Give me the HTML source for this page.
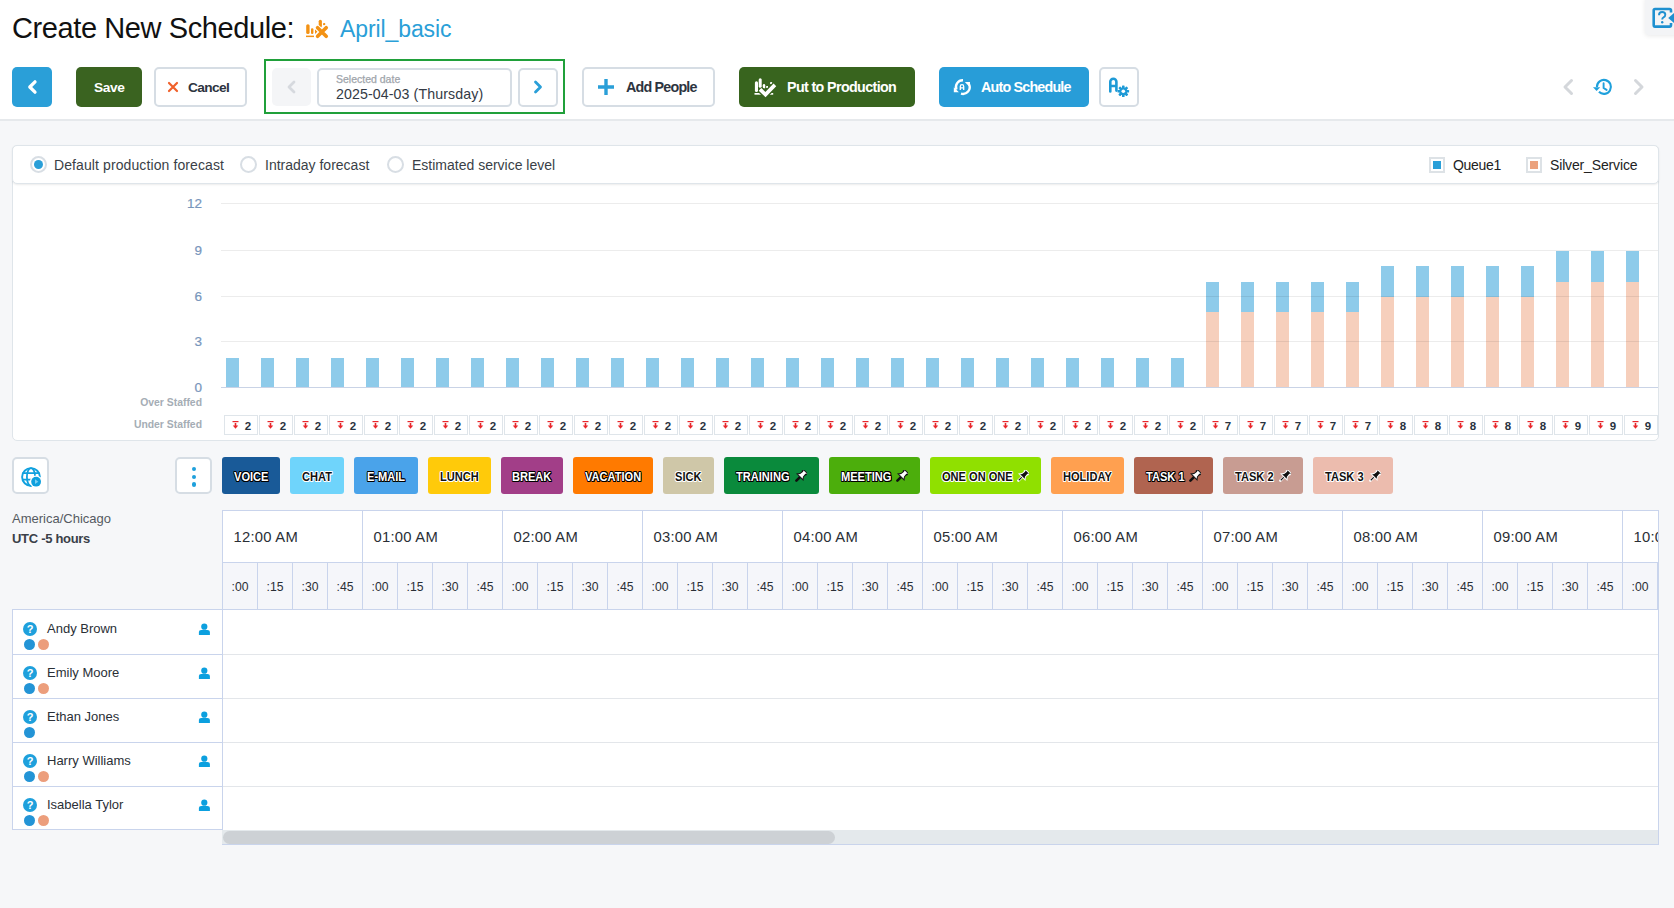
<!DOCTYPE html><html><head><meta charset="utf-8"><style>
*{box-sizing:border-box;margin:0;padding:0}
html,body{width:1674px;height:908px;overflow:hidden}
body{background:#f6f7f9;font-family:"Liberation Sans",sans-serif;position:relative;color:#2b3038}
.abs{position:absolute}
.t{position:absolute;white-space:nowrap;line-height:1}
.btn{position:absolute;border-radius:5px}
.ob{position:absolute;border:2px solid #d6dde4;border-radius:5px;background:#fff}
</style></head><body>

<div class="abs" style="left:0;top:0;width:1674px;height:119px;background:#fff"></div>
<div class="abs" style="left:0;top:119px;width:1674px;height:2px;background:#e6e9ec"></div>
<div class="t" style="left:12px;top:14.2px;font-size:29px;color:#111;letter-spacing:-0.4px">Create New Schedule:</div>
<svg class="abs" style="left:300px;top:14px" width="32" height="28" viewBox="0 0 32 28">
<g fill="#f39214"><rect x="6.2" y="10.2" width="3.4" height="9.8" rx="1.6"/><rect x="11" y="14.2" width="2.4" height="5.8" rx="1.1"/>
<path d="M15 15.2 L17.6 17.6 L15 20Z"/><rect x="6" y="21.6" width="8" height="1.5"/>
<rect x="18.7" y="5.7" width="3.2" height="7.8" rx="1.6"/><rect x="23" y="9" width="2.3" height="2.2" rx="1"/></g>
<path d="M17.6 13.8 L26.2 22.2 M26.2 13.8 L17.6 22.2" stroke="#fff" stroke-width="5.6" stroke-linecap="round"/>
<path d="M17.6 13.8 L26.2 22.2 M26.2 13.8 L17.6 22.2" stroke="#f39214" stroke-width="3.7" stroke-linecap="round"/>
</svg>
<div class="t" style="left:340px;top:18.3px;font-size:23px;color:#2a9fd8;letter-spacing:-0.1px">April_basic</div>
<div class="btn" style="left:12px;top:67px;width:40px;height:40px;background:#2a9fd8"></div>
<svg class="abs" style="left:12px;top:67px" width="40" height="40"><path d="M23 14.8 L17.8 20 L23 25.2" stroke="#fff" stroke-width="3.3" fill="none" stroke-linecap="round" stroke-linejoin="round"/></svg>
<div class="btn" style="left:76px;top:67px;width:66px;height:40px;background:#3a6320"></div>
<div class="t" style="left:94px;top:80.5px;font-size:13.7px;font-weight:700;color:#fff;letter-spacing:-0.4px">Save</div>
<div class="ob" style="left:154px;top:67px;width:93px;height:40px"></div>
<svg class="abs" style="left:167px;top:81px" width="12" height="12"><path d="M2 2 L10 10 M10 2 L2 10" stroke="#f0602a" stroke-width="2.2" stroke-linecap="round"/></svg>
<div class="t" style="left:188px;top:80.5px;font-size:13.7px;font-weight:700;color:#2d3440;letter-spacing:-0.6px">Cancel</div>
<div class="abs" style="left:264px;top:59px;width:301px;height:55px;border:2px solid #20a03a"></div>
<div class="btn" style="left:272px;top:68px;width:39px;height:38px;background:#f4f5f7"></div>
<svg class="abs" style="left:272px;top:68px" width="39" height="38"><path d="M22 14 L17 19 L22 24" stroke="#d6d9de" stroke-width="2.8" fill="none" stroke-linecap="round" stroke-linejoin="round"/></svg>
<div class="ob" style="left:317px;top:68px;width:195px;height:39px"></div>
<div class="t" style="left:336px;top:74px;font-size:10.5px;color:#a0a5ab;-webkit-text-stroke:0.25px #a0a5ab">Selected date</div>
<div class="t" style="left:336px;top:87px;font-size:14.2px;color:#333a45;letter-spacing:0.1px">2025-04-03 (Thursday)</div>
<div class="ob" style="left:518px;top:68px;width:40px;height:39px"></div>
<svg class="abs" style="left:518px;top:68px" width="40" height="39"><path d="M17.5 14 L22.5 19 L17.5 24" stroke="#2a9fd8" stroke-width="2.8" fill="none" stroke-linecap="round" stroke-linejoin="round"/></svg>
<div class="ob" style="left:582px;top:67px;width:133px;height:40px"></div>
<svg class="abs" style="left:597px;top:78px" width="18" height="18"><path d="M9 1 V17 M1 9 H17" stroke="#2a9fd8" stroke-width="3.4"/></svg>
<div class="t" style="left:626px;top:80px;font-size:14.3px;font-weight:700;color:#2d3440;letter-spacing:-0.8px">Add People</div>
<div class="btn" style="left:739px;top:67px;width:176px;height:40px;background:#38641e"></div>
<svg class="abs" style="left:750px;top:74px" width="30" height="26" viewBox="0 0 30 26">
<g fill="#fff"><rect x="4.9" y="7.2" width="3.1" height="10.8" rx="1.5"/><rect x="8.7" y="4.3" width="3" height="9.5" rx="1.5"/>
<rect x="12.8" y="10" width="2.4" height="4.5" rx="1.2"/><rect x="16.2" y="12" width="1.8" height="2"/><rect x="20" y="8" width="2.3" height="2.3" rx="1"/>
<rect x="4.5" y="19" width="7" height="1.7"/><rect x="18.6" y="19" width="4.6" height="1.7"/><rect x="18.5" y="16" width="3.5" height="1.8"/></g>
<path d="M10 15.3 L15.5 20.6 L24.9 10.9" stroke="#38641e" stroke-width="6.5" fill="none"/>
<path d="M10 15.3 L15.5 20.6 L24.9 10.9" stroke="#fff" stroke-width="3.7" fill="none"/>
</svg>
<div class="t" style="left:787px;top:80px;font-size:14.3px;font-weight:700;color:#fff;letter-spacing:-0.63px">Put to Production</div>
<div class="btn" style="left:939px;top:67px;width:150px;height:40px;background:#289dd8"></div>
<svg class="abs" style="left:948px;top:74px" width="28" height="26" viewBox="0 0 28 26">
<path d="M15 6.3 A6.8 6.8 0 0 0 8.4 15.6" stroke="#fff" stroke-width="2.4" fill="none"/>
<path d="M5.8 13.2 L5.8 18.2 L10.9 18.2Z" fill="#fff"/>
<path d="M21 10.2 A6.8 6.8 0 0 1 13 19.7" stroke="#fff" stroke-width="2.4" fill="none"/>
<path d="M16.8 8 L22 8 L22 13.2Z" fill="#fff"/>
<path d="M12.3 15.9 V12.4 A1.7 1.7 0 0 1 15.7 12.4 V15.9 M12.3 13.9 H15.7" stroke="#fff" stroke-width="1.3" fill="none"/>
</svg>
<div class="t" style="left:981px;top:80px;font-size:14.3px;font-weight:700;color:#fff;letter-spacing:-0.8px">Auto Schedule</div>
<div class="ob" style="left:1099px;top:67px;width:40px;height:40px"></div>
<svg class="abs" style="left:1104px;top:72px" width="30" height="30" viewBox="0 0 30 30">
<path d="M6.3 19.5 V9.8 A3.05 3.05 0 0 1 12.4 9.8 V18.6 M6.3 14 H12.4" stroke="#1e9ad6" stroke-width="2.6" fill="none" stroke-linecap="round"/>
<g transform="translate(19.3 19.3)" fill="#1e9ad6"><circle r="5.5" fill="#fff"/><rect x="-1.3" y="-5.8" width="2.6" height="3" rx="0.6" transform="rotate(0)"/><rect x="-1.3" y="-5.8" width="2.6" height="3" rx="0.6" transform="rotate(45)"/><rect x="-1.3" y="-5.8" width="2.6" height="3" rx="0.6" transform="rotate(90)"/><rect x="-1.3" y="-5.8" width="2.6" height="3" rx="0.6" transform="rotate(135)"/><rect x="-1.3" y="-5.8" width="2.6" height="3" rx="0.6" transform="rotate(180)"/><rect x="-1.3" y="-5.8" width="2.6" height="3" rx="0.6" transform="rotate(225)"/><rect x="-1.3" y="-5.8" width="2.6" height="3" rx="0.6" transform="rotate(270)"/><rect x="-1.3" y="-5.8" width="2.6" height="3" rx="0.6" transform="rotate(315)"/><circle r="3.9"/><circle r="1.8" fill="#fff"/></g>
</svg>
<svg class="abs" style="left:1558px;top:76px" width="20" height="21"><path d="M13.5 4.5 L7 11 L13.5 17.5" stroke="#d4d7db" stroke-width="3" fill="none" stroke-linecap="round" stroke-linejoin="round"/></svg>
<svg class="abs" style="left:1588px;top:74px" width="30" height="26" viewBox="0 0 30 26">
<path d="M10.95 17.85 A7 7 0 1 0 8.9 12.9" stroke="#1ea0dc" stroke-width="2.1" fill="none"/>
<path d="M5 13.2 L12.2 13.2 L8.6 16.9Z" fill="#1ea0dc"/><path d="M15.6 9.2 V14 L18.6 15.9" stroke="#1ea0dc" stroke-width="1.9" fill="none" stroke-linecap="round"/>
</svg>
<svg class="abs" style="left:1630px;top:76px" width="20" height="21"><path d="M5.5 4.5 L12 11 L5.5 17.5" stroke="#d4d7db" stroke-width="3" fill="none" stroke-linecap="round" stroke-linejoin="round"/></svg>
<div class="abs" style="left:1645px;top:-2px;width:40px;height:37px;background:#f3f4f6;box-shadow:0 1px 5px rgba(0,0,0,0.09);border-radius:0 0 0 4px"></div>
<svg class="abs" style="left:1652px;top:7px" width="22" height="22" viewBox="0 0 22 22">
<path d="M19 5.5 V3.5 Q19 2 17.5 2 H3 Q1.7 2 1.7 3.5 V18 Q1.7 19.6 3 19.6 H17.5 Q19 19.6 19 18 V16" stroke="#1e90d0" stroke-width="2.6" fill="none"/>
<path d="M22 6 L16.2 11 L22 16Z" fill="#1e90d0"/>
<path d="M7 8.2 Q7 5 10.2 5 Q13.3 5 13.3 7.8 Q13.3 9.6 11.5 10.4 Q10.2 11 10.2 12.6" stroke="#1e90d0" stroke-width="1.9" fill="none"/>
<circle cx="10.2" cy="15.3" r="1.2" fill="#1e90d0"/>
</svg>
<div class="abs" style="left:12px;top:145px;width:1647px;height:296px;background:#fff;border:1px solid #dfe5ea;border-radius:5px"></div>
<div class="abs" style="left:12px;top:145px;width:1647px;height:39px;background:#fff;border:1px solid #dfe5ea;border-radius:5px;box-shadow:0 1px 2px rgba(0,0,0,0.08)"></div>
<div class="abs" style="left:30px;top:156px;width:17px;height:17px;border-radius:50%;border:2px solid #d8dee4;background:#fff"></div><div class="abs" style="left:34px;top:160px;width:9px;height:9px;border-radius:50%;background:#2a9fd8"></div>
<div class="abs" style="left:240px;top:156px;width:17px;height:17px;border-radius:50%;border:2px solid #d8dee4;background:#fff"></div>
<div class="abs" style="left:387px;top:156px;width:17px;height:17px;border-radius:50%;border:2px solid #d8dee4;background:#fff"></div>
<div class="t" style="left:54px;top:158px;font-size:14px;color:#3a3f47;letter-spacing:0.1px">Default production forecast</div>
<div class="t" style="left:265px;top:158px;font-size:14px;color:#3a3f47">Intraday forecast</div>
<div class="t" style="left:412px;top:158px;font-size:14px;color:#3a3f47">Estimated service level</div>
<div class="abs" style="left:1429px;top:157px;width:16px;height:16px;border:2px solid #dde2e6;background:#fff"></div><div class="abs" style="left:1433px;top:161px;width:8px;height:8px;background:#2a9fd8"></div>
<div class="t" style="left:1453px;top:158px;font-size:14px;color:#222;letter-spacing:-0.3px">Queue1</div>
<div class="abs" style="left:1526px;top:157px;width:16px;height:16px;border:2px solid #dde2e6;background:#fff"></div><div class="abs" style="left:1530px;top:161px;width:8px;height:8px;background:#eba27e"></div>
<div class="t" style="left:1550px;top:158px;font-size:14px;color:#222;letter-spacing:-0.15px">Silver_Service</div>
<div class="t" style="left:150px;width:52px;text-align:right;top:197px;font-size:13.5px;color:#7896bc;-webkit-text-stroke:0.2px #7896bc">12</div>
<div class="t" style="left:150px;width:52px;text-align:right;top:244px;font-size:13.5px;color:#7896bc;-webkit-text-stroke:0.2px #7896bc">9</div>
<div class="t" style="left:150px;width:52px;text-align:right;top:290px;font-size:13.5px;color:#7896bc;-webkit-text-stroke:0.2px #7896bc">6</div>
<div class="t" style="left:150px;width:52px;text-align:right;top:335px;font-size:13.5px;color:#7896bc;-webkit-text-stroke:0.2px #7896bc">3</div>
<div class="t" style="left:150px;width:52px;text-align:right;top:381px;font-size:13.5px;color:#7896bc;-webkit-text-stroke:0.2px #7896bc">0</div>
<div class="t" style="left:100px;width:102px;text-align:right;top:398px;font-size:10.4px;font-weight:700;color:#a5adb5">Over Staffed</div>
<div class="t" style="left:100px;width:102px;text-align:right;top:420px;font-size:10.4px;font-weight:700;color:#a5adb5">Under Staffed</div>
<div class="abs" style="left:226px;top:358px;width:13px;height:29px;background:#8ecbea"></div>
<div class="abs" style="left:224px;top:415px;width:34px;height:20px;border:1px solid #dfe5ea"></div>
<svg class="abs" style="left:232px;top:421px" width="7" height="8" viewBox="0 0 7 8"><path d="M0.5 0.6 H6.5" stroke="#e8262a" stroke-width="1.2"/><path d="M3.5 2 V5" stroke="#e8262a" stroke-width="1.6"/><path d="M0.8 4.4 L3.5 7.8 L6.2 4.4Z" fill="#e8262a"/></svg>
<div class="t" style="left:244.7px;top:421px;font-size:11.5px;font-weight:700;color:#2a3340">2</div>
<div class="abs" style="left:261px;top:358px;width:13px;height:29px;background:#8ecbea"></div>
<div class="abs" style="left:259px;top:415px;width:34px;height:20px;border:1px solid #dfe5ea"></div>
<svg class="abs" style="left:267px;top:421px" width="7" height="8" viewBox="0 0 7 8"><path d="M0.5 0.6 H6.5" stroke="#e8262a" stroke-width="1.2"/><path d="M3.5 2 V5" stroke="#e8262a" stroke-width="1.6"/><path d="M0.8 4.4 L3.5 7.8 L6.2 4.4Z" fill="#e8262a"/></svg>
<div class="t" style="left:279.7px;top:421px;font-size:11.5px;font-weight:700;color:#2a3340">2</div>
<div class="abs" style="left:296px;top:358px;width:13px;height:29px;background:#8ecbea"></div>
<div class="abs" style="left:294px;top:415px;width:34px;height:20px;border:1px solid #dfe5ea"></div>
<svg class="abs" style="left:302px;top:421px" width="7" height="8" viewBox="0 0 7 8"><path d="M0.5 0.6 H6.5" stroke="#e8262a" stroke-width="1.2"/><path d="M3.5 2 V5" stroke="#e8262a" stroke-width="1.6"/><path d="M0.8 4.4 L3.5 7.8 L6.2 4.4Z" fill="#e8262a"/></svg>
<div class="t" style="left:314.7px;top:421px;font-size:11.5px;font-weight:700;color:#2a3340">2</div>
<div class="abs" style="left:331px;top:358px;width:13px;height:29px;background:#8ecbea"></div>
<div class="abs" style="left:329px;top:415px;width:34px;height:20px;border:1px solid #dfe5ea"></div>
<svg class="abs" style="left:337px;top:421px" width="7" height="8" viewBox="0 0 7 8"><path d="M0.5 0.6 H6.5" stroke="#e8262a" stroke-width="1.2"/><path d="M3.5 2 V5" stroke="#e8262a" stroke-width="1.6"/><path d="M0.8 4.4 L3.5 7.8 L6.2 4.4Z" fill="#e8262a"/></svg>
<div class="t" style="left:349.7px;top:421px;font-size:11.5px;font-weight:700;color:#2a3340">2</div>
<div class="abs" style="left:366px;top:358px;width:13px;height:29px;background:#8ecbea"></div>
<div class="abs" style="left:364px;top:415px;width:34px;height:20px;border:1px solid #dfe5ea"></div>
<svg class="abs" style="left:372px;top:421px" width="7" height="8" viewBox="0 0 7 8"><path d="M0.5 0.6 H6.5" stroke="#e8262a" stroke-width="1.2"/><path d="M3.5 2 V5" stroke="#e8262a" stroke-width="1.6"/><path d="M0.8 4.4 L3.5 7.8 L6.2 4.4Z" fill="#e8262a"/></svg>
<div class="t" style="left:384.7px;top:421px;font-size:11.5px;font-weight:700;color:#2a3340">2</div>
<div class="abs" style="left:401px;top:358px;width:13px;height:29px;background:#8ecbea"></div>
<div class="abs" style="left:399px;top:415px;width:34px;height:20px;border:1px solid #dfe5ea"></div>
<svg class="abs" style="left:407px;top:421px" width="7" height="8" viewBox="0 0 7 8"><path d="M0.5 0.6 H6.5" stroke="#e8262a" stroke-width="1.2"/><path d="M3.5 2 V5" stroke="#e8262a" stroke-width="1.6"/><path d="M0.8 4.4 L3.5 7.8 L6.2 4.4Z" fill="#e8262a"/></svg>
<div class="t" style="left:419.7px;top:421px;font-size:11.5px;font-weight:700;color:#2a3340">2</div>
<div class="abs" style="left:436px;top:358px;width:13px;height:29px;background:#8ecbea"></div>
<div class="abs" style="left:434px;top:415px;width:34px;height:20px;border:1px solid #dfe5ea"></div>
<svg class="abs" style="left:442px;top:421px" width="7" height="8" viewBox="0 0 7 8"><path d="M0.5 0.6 H6.5" stroke="#e8262a" stroke-width="1.2"/><path d="M3.5 2 V5" stroke="#e8262a" stroke-width="1.6"/><path d="M0.8 4.4 L3.5 7.8 L6.2 4.4Z" fill="#e8262a"/></svg>
<div class="t" style="left:454.7px;top:421px;font-size:11.5px;font-weight:700;color:#2a3340">2</div>
<div class="abs" style="left:471px;top:358px;width:13px;height:29px;background:#8ecbea"></div>
<div class="abs" style="left:469px;top:415px;width:34px;height:20px;border:1px solid #dfe5ea"></div>
<svg class="abs" style="left:477px;top:421px" width="7" height="8" viewBox="0 0 7 8"><path d="M0.5 0.6 H6.5" stroke="#e8262a" stroke-width="1.2"/><path d="M3.5 2 V5" stroke="#e8262a" stroke-width="1.6"/><path d="M0.8 4.4 L3.5 7.8 L6.2 4.4Z" fill="#e8262a"/></svg>
<div class="t" style="left:489.7px;top:421px;font-size:11.5px;font-weight:700;color:#2a3340">2</div>
<div class="abs" style="left:506px;top:358px;width:13px;height:29px;background:#8ecbea"></div>
<div class="abs" style="left:504px;top:415px;width:34px;height:20px;border:1px solid #dfe5ea"></div>
<svg class="abs" style="left:512px;top:421px" width="7" height="8" viewBox="0 0 7 8"><path d="M0.5 0.6 H6.5" stroke="#e8262a" stroke-width="1.2"/><path d="M3.5 2 V5" stroke="#e8262a" stroke-width="1.6"/><path d="M0.8 4.4 L3.5 7.8 L6.2 4.4Z" fill="#e8262a"/></svg>
<div class="t" style="left:524.7px;top:421px;font-size:11.5px;font-weight:700;color:#2a3340">2</div>
<div class="abs" style="left:541px;top:358px;width:13px;height:29px;background:#8ecbea"></div>
<div class="abs" style="left:539px;top:415px;width:34px;height:20px;border:1px solid #dfe5ea"></div>
<svg class="abs" style="left:547px;top:421px" width="7" height="8" viewBox="0 0 7 8"><path d="M0.5 0.6 H6.5" stroke="#e8262a" stroke-width="1.2"/><path d="M3.5 2 V5" stroke="#e8262a" stroke-width="1.6"/><path d="M0.8 4.4 L3.5 7.8 L6.2 4.4Z" fill="#e8262a"/></svg>
<div class="t" style="left:559.7px;top:421px;font-size:11.5px;font-weight:700;color:#2a3340">2</div>
<div class="abs" style="left:576px;top:358px;width:13px;height:29px;background:#8ecbea"></div>
<div class="abs" style="left:574px;top:415px;width:34px;height:20px;border:1px solid #dfe5ea"></div>
<svg class="abs" style="left:582px;top:421px" width="7" height="8" viewBox="0 0 7 8"><path d="M0.5 0.6 H6.5" stroke="#e8262a" stroke-width="1.2"/><path d="M3.5 2 V5" stroke="#e8262a" stroke-width="1.6"/><path d="M0.8 4.4 L3.5 7.8 L6.2 4.4Z" fill="#e8262a"/></svg>
<div class="t" style="left:594.7px;top:421px;font-size:11.5px;font-weight:700;color:#2a3340">2</div>
<div class="abs" style="left:611px;top:358px;width:13px;height:29px;background:#8ecbea"></div>
<div class="abs" style="left:609px;top:415px;width:34px;height:20px;border:1px solid #dfe5ea"></div>
<svg class="abs" style="left:617px;top:421px" width="7" height="8" viewBox="0 0 7 8"><path d="M0.5 0.6 H6.5" stroke="#e8262a" stroke-width="1.2"/><path d="M3.5 2 V5" stroke="#e8262a" stroke-width="1.6"/><path d="M0.8 4.4 L3.5 7.8 L6.2 4.4Z" fill="#e8262a"/></svg>
<div class="t" style="left:629.7px;top:421px;font-size:11.5px;font-weight:700;color:#2a3340">2</div>
<div class="abs" style="left:646px;top:358px;width:13px;height:29px;background:#8ecbea"></div>
<div class="abs" style="left:644px;top:415px;width:34px;height:20px;border:1px solid #dfe5ea"></div>
<svg class="abs" style="left:652px;top:421px" width="7" height="8" viewBox="0 0 7 8"><path d="M0.5 0.6 H6.5" stroke="#e8262a" stroke-width="1.2"/><path d="M3.5 2 V5" stroke="#e8262a" stroke-width="1.6"/><path d="M0.8 4.4 L3.5 7.8 L6.2 4.4Z" fill="#e8262a"/></svg>
<div class="t" style="left:664.7px;top:421px;font-size:11.5px;font-weight:700;color:#2a3340">2</div>
<div class="abs" style="left:681px;top:358px;width:13px;height:29px;background:#8ecbea"></div>
<div class="abs" style="left:679px;top:415px;width:34px;height:20px;border:1px solid #dfe5ea"></div>
<svg class="abs" style="left:687px;top:421px" width="7" height="8" viewBox="0 0 7 8"><path d="M0.5 0.6 H6.5" stroke="#e8262a" stroke-width="1.2"/><path d="M3.5 2 V5" stroke="#e8262a" stroke-width="1.6"/><path d="M0.8 4.4 L3.5 7.8 L6.2 4.4Z" fill="#e8262a"/></svg>
<div class="t" style="left:699.7px;top:421px;font-size:11.5px;font-weight:700;color:#2a3340">2</div>
<div class="abs" style="left:716px;top:358px;width:13px;height:29px;background:#8ecbea"></div>
<div class="abs" style="left:714px;top:415px;width:34px;height:20px;border:1px solid #dfe5ea"></div>
<svg class="abs" style="left:722px;top:421px" width="7" height="8" viewBox="0 0 7 8"><path d="M0.5 0.6 H6.5" stroke="#e8262a" stroke-width="1.2"/><path d="M3.5 2 V5" stroke="#e8262a" stroke-width="1.6"/><path d="M0.8 4.4 L3.5 7.8 L6.2 4.4Z" fill="#e8262a"/></svg>
<div class="t" style="left:734.7px;top:421px;font-size:11.5px;font-weight:700;color:#2a3340">2</div>
<div class="abs" style="left:751px;top:358px;width:13px;height:29px;background:#8ecbea"></div>
<div class="abs" style="left:749px;top:415px;width:34px;height:20px;border:1px solid #dfe5ea"></div>
<svg class="abs" style="left:757px;top:421px" width="7" height="8" viewBox="0 0 7 8"><path d="M0.5 0.6 H6.5" stroke="#e8262a" stroke-width="1.2"/><path d="M3.5 2 V5" stroke="#e8262a" stroke-width="1.6"/><path d="M0.8 4.4 L3.5 7.8 L6.2 4.4Z" fill="#e8262a"/></svg>
<div class="t" style="left:769.7px;top:421px;font-size:11.5px;font-weight:700;color:#2a3340">2</div>
<div class="abs" style="left:786px;top:358px;width:13px;height:29px;background:#8ecbea"></div>
<div class="abs" style="left:784px;top:415px;width:34px;height:20px;border:1px solid #dfe5ea"></div>
<svg class="abs" style="left:792px;top:421px" width="7" height="8" viewBox="0 0 7 8"><path d="M0.5 0.6 H6.5" stroke="#e8262a" stroke-width="1.2"/><path d="M3.5 2 V5" stroke="#e8262a" stroke-width="1.6"/><path d="M0.8 4.4 L3.5 7.8 L6.2 4.4Z" fill="#e8262a"/></svg>
<div class="t" style="left:804.7px;top:421px;font-size:11.5px;font-weight:700;color:#2a3340">2</div>
<div class="abs" style="left:821px;top:358px;width:13px;height:29px;background:#8ecbea"></div>
<div class="abs" style="left:819px;top:415px;width:34px;height:20px;border:1px solid #dfe5ea"></div>
<svg class="abs" style="left:827px;top:421px" width="7" height="8" viewBox="0 0 7 8"><path d="M0.5 0.6 H6.5" stroke="#e8262a" stroke-width="1.2"/><path d="M3.5 2 V5" stroke="#e8262a" stroke-width="1.6"/><path d="M0.8 4.4 L3.5 7.8 L6.2 4.4Z" fill="#e8262a"/></svg>
<div class="t" style="left:839.7px;top:421px;font-size:11.5px;font-weight:700;color:#2a3340">2</div>
<div class="abs" style="left:856px;top:358px;width:13px;height:29px;background:#8ecbea"></div>
<div class="abs" style="left:854px;top:415px;width:34px;height:20px;border:1px solid #dfe5ea"></div>
<svg class="abs" style="left:862px;top:421px" width="7" height="8" viewBox="0 0 7 8"><path d="M0.5 0.6 H6.5" stroke="#e8262a" stroke-width="1.2"/><path d="M3.5 2 V5" stroke="#e8262a" stroke-width="1.6"/><path d="M0.8 4.4 L3.5 7.8 L6.2 4.4Z" fill="#e8262a"/></svg>
<div class="t" style="left:874.7px;top:421px;font-size:11.5px;font-weight:700;color:#2a3340">2</div>
<div class="abs" style="left:891px;top:358px;width:13px;height:29px;background:#8ecbea"></div>
<div class="abs" style="left:889px;top:415px;width:34px;height:20px;border:1px solid #dfe5ea"></div>
<svg class="abs" style="left:897px;top:421px" width="7" height="8" viewBox="0 0 7 8"><path d="M0.5 0.6 H6.5" stroke="#e8262a" stroke-width="1.2"/><path d="M3.5 2 V5" stroke="#e8262a" stroke-width="1.6"/><path d="M0.8 4.4 L3.5 7.8 L6.2 4.4Z" fill="#e8262a"/></svg>
<div class="t" style="left:909.7px;top:421px;font-size:11.5px;font-weight:700;color:#2a3340">2</div>
<div class="abs" style="left:926px;top:358px;width:13px;height:29px;background:#8ecbea"></div>
<div class="abs" style="left:924px;top:415px;width:34px;height:20px;border:1px solid #dfe5ea"></div>
<svg class="abs" style="left:932px;top:421px" width="7" height="8" viewBox="0 0 7 8"><path d="M0.5 0.6 H6.5" stroke="#e8262a" stroke-width="1.2"/><path d="M3.5 2 V5" stroke="#e8262a" stroke-width="1.6"/><path d="M0.8 4.4 L3.5 7.8 L6.2 4.4Z" fill="#e8262a"/></svg>
<div class="t" style="left:944.7px;top:421px;font-size:11.5px;font-weight:700;color:#2a3340">2</div>
<div class="abs" style="left:961px;top:358px;width:13px;height:29px;background:#8ecbea"></div>
<div class="abs" style="left:959px;top:415px;width:34px;height:20px;border:1px solid #dfe5ea"></div>
<svg class="abs" style="left:967px;top:421px" width="7" height="8" viewBox="0 0 7 8"><path d="M0.5 0.6 H6.5" stroke="#e8262a" stroke-width="1.2"/><path d="M3.5 2 V5" stroke="#e8262a" stroke-width="1.6"/><path d="M0.8 4.4 L3.5 7.8 L6.2 4.4Z" fill="#e8262a"/></svg>
<div class="t" style="left:979.7px;top:421px;font-size:11.5px;font-weight:700;color:#2a3340">2</div>
<div class="abs" style="left:996px;top:358px;width:13px;height:29px;background:#8ecbea"></div>
<div class="abs" style="left:994px;top:415px;width:34px;height:20px;border:1px solid #dfe5ea"></div>
<svg class="abs" style="left:1002px;top:421px" width="7" height="8" viewBox="0 0 7 8"><path d="M0.5 0.6 H6.5" stroke="#e8262a" stroke-width="1.2"/><path d="M3.5 2 V5" stroke="#e8262a" stroke-width="1.6"/><path d="M0.8 4.4 L3.5 7.8 L6.2 4.4Z" fill="#e8262a"/></svg>
<div class="t" style="left:1014.7px;top:421px;font-size:11.5px;font-weight:700;color:#2a3340">2</div>
<div class="abs" style="left:1031px;top:358px;width:13px;height:29px;background:#8ecbea"></div>
<div class="abs" style="left:1029px;top:415px;width:34px;height:20px;border:1px solid #dfe5ea"></div>
<svg class="abs" style="left:1037px;top:421px" width="7" height="8" viewBox="0 0 7 8"><path d="M0.5 0.6 H6.5" stroke="#e8262a" stroke-width="1.2"/><path d="M3.5 2 V5" stroke="#e8262a" stroke-width="1.6"/><path d="M0.8 4.4 L3.5 7.8 L6.2 4.4Z" fill="#e8262a"/></svg>
<div class="t" style="left:1049.7px;top:421px;font-size:11.5px;font-weight:700;color:#2a3340">2</div>
<div class="abs" style="left:1066px;top:358px;width:13px;height:29px;background:#8ecbea"></div>
<div class="abs" style="left:1064px;top:415px;width:34px;height:20px;border:1px solid #dfe5ea"></div>
<svg class="abs" style="left:1072px;top:421px" width="7" height="8" viewBox="0 0 7 8"><path d="M0.5 0.6 H6.5" stroke="#e8262a" stroke-width="1.2"/><path d="M3.5 2 V5" stroke="#e8262a" stroke-width="1.6"/><path d="M0.8 4.4 L3.5 7.8 L6.2 4.4Z" fill="#e8262a"/></svg>
<div class="t" style="left:1084.7px;top:421px;font-size:11.5px;font-weight:700;color:#2a3340">2</div>
<div class="abs" style="left:1101px;top:358px;width:13px;height:29px;background:#8ecbea"></div>
<div class="abs" style="left:1099px;top:415px;width:34px;height:20px;border:1px solid #dfe5ea"></div>
<svg class="abs" style="left:1107px;top:421px" width="7" height="8" viewBox="0 0 7 8"><path d="M0.5 0.6 H6.5" stroke="#e8262a" stroke-width="1.2"/><path d="M3.5 2 V5" stroke="#e8262a" stroke-width="1.6"/><path d="M0.8 4.4 L3.5 7.8 L6.2 4.4Z" fill="#e8262a"/></svg>
<div class="t" style="left:1119.7px;top:421px;font-size:11.5px;font-weight:700;color:#2a3340">2</div>
<div class="abs" style="left:1136px;top:358px;width:13px;height:29px;background:#8ecbea"></div>
<div class="abs" style="left:1134px;top:415px;width:34px;height:20px;border:1px solid #dfe5ea"></div>
<svg class="abs" style="left:1142px;top:421px" width="7" height="8" viewBox="0 0 7 8"><path d="M0.5 0.6 H6.5" stroke="#e8262a" stroke-width="1.2"/><path d="M3.5 2 V5" stroke="#e8262a" stroke-width="1.6"/><path d="M0.8 4.4 L3.5 7.8 L6.2 4.4Z" fill="#e8262a"/></svg>
<div class="t" style="left:1154.7px;top:421px;font-size:11.5px;font-weight:700;color:#2a3340">2</div>
<div class="abs" style="left:1171px;top:358px;width:13px;height:29px;background:#8ecbea"></div>
<div class="abs" style="left:1169px;top:415px;width:34px;height:20px;border:1px solid #dfe5ea"></div>
<svg class="abs" style="left:1177px;top:421px" width="7" height="8" viewBox="0 0 7 8"><path d="M0.5 0.6 H6.5" stroke="#e8262a" stroke-width="1.2"/><path d="M3.5 2 V5" stroke="#e8262a" stroke-width="1.6"/><path d="M0.8 4.4 L3.5 7.8 L6.2 4.4Z" fill="#e8262a"/></svg>
<div class="t" style="left:1189.7px;top:421px;font-size:11.5px;font-weight:700;color:#2a3340">2</div>
<div class="abs" style="left:1206px;top:312px;width:13px;height:75px;background:#f6cfbc"></div>
<div class="abs" style="left:1206px;top:282px;width:13px;height:30px;background:#8ecbea"></div>
<div class="abs" style="left:1204px;top:415px;width:34px;height:20px;border:1px solid #dfe5ea"></div>
<svg class="abs" style="left:1212px;top:421px" width="7" height="8" viewBox="0 0 7 8"><path d="M0.5 0.6 H6.5" stroke="#e8262a" stroke-width="1.2"/><path d="M3.5 2 V5" stroke="#e8262a" stroke-width="1.6"/><path d="M0.8 4.4 L3.5 7.8 L6.2 4.4Z" fill="#e8262a"/></svg>
<div class="t" style="left:1224.7px;top:421px;font-size:11.5px;font-weight:700;color:#2a3340">7</div>
<div class="abs" style="left:1241px;top:312px;width:13px;height:75px;background:#f6cfbc"></div>
<div class="abs" style="left:1241px;top:282px;width:13px;height:30px;background:#8ecbea"></div>
<div class="abs" style="left:1239px;top:415px;width:34px;height:20px;border:1px solid #dfe5ea"></div>
<svg class="abs" style="left:1247px;top:421px" width="7" height="8" viewBox="0 0 7 8"><path d="M0.5 0.6 H6.5" stroke="#e8262a" stroke-width="1.2"/><path d="M3.5 2 V5" stroke="#e8262a" stroke-width="1.6"/><path d="M0.8 4.4 L3.5 7.8 L6.2 4.4Z" fill="#e8262a"/></svg>
<div class="t" style="left:1259.7px;top:421px;font-size:11.5px;font-weight:700;color:#2a3340">7</div>
<div class="abs" style="left:1276px;top:312px;width:13px;height:75px;background:#f6cfbc"></div>
<div class="abs" style="left:1276px;top:282px;width:13px;height:30px;background:#8ecbea"></div>
<div class="abs" style="left:1274px;top:415px;width:34px;height:20px;border:1px solid #dfe5ea"></div>
<svg class="abs" style="left:1282px;top:421px" width="7" height="8" viewBox="0 0 7 8"><path d="M0.5 0.6 H6.5" stroke="#e8262a" stroke-width="1.2"/><path d="M3.5 2 V5" stroke="#e8262a" stroke-width="1.6"/><path d="M0.8 4.4 L3.5 7.8 L6.2 4.4Z" fill="#e8262a"/></svg>
<div class="t" style="left:1294.7px;top:421px;font-size:11.5px;font-weight:700;color:#2a3340">7</div>
<div class="abs" style="left:1311px;top:312px;width:13px;height:75px;background:#f6cfbc"></div>
<div class="abs" style="left:1311px;top:282px;width:13px;height:30px;background:#8ecbea"></div>
<div class="abs" style="left:1309px;top:415px;width:34px;height:20px;border:1px solid #dfe5ea"></div>
<svg class="abs" style="left:1317px;top:421px" width="7" height="8" viewBox="0 0 7 8"><path d="M0.5 0.6 H6.5" stroke="#e8262a" stroke-width="1.2"/><path d="M3.5 2 V5" stroke="#e8262a" stroke-width="1.6"/><path d="M0.8 4.4 L3.5 7.8 L6.2 4.4Z" fill="#e8262a"/></svg>
<div class="t" style="left:1329.7px;top:421px;font-size:11.5px;font-weight:700;color:#2a3340">7</div>
<div class="abs" style="left:1346px;top:312px;width:13px;height:75px;background:#f6cfbc"></div>
<div class="abs" style="left:1346px;top:282px;width:13px;height:30px;background:#8ecbea"></div>
<div class="abs" style="left:1344px;top:415px;width:34px;height:20px;border:1px solid #dfe5ea"></div>
<svg class="abs" style="left:1352px;top:421px" width="7" height="8" viewBox="0 0 7 8"><path d="M0.5 0.6 H6.5" stroke="#e8262a" stroke-width="1.2"/><path d="M3.5 2 V5" stroke="#e8262a" stroke-width="1.6"/><path d="M0.8 4.4 L3.5 7.8 L6.2 4.4Z" fill="#e8262a"/></svg>
<div class="t" style="left:1364.7px;top:421px;font-size:11.5px;font-weight:700;color:#2a3340">7</div>
<div class="abs" style="left:1381px;top:297px;width:13px;height:90px;background:#f6cfbc"></div>
<div class="abs" style="left:1381px;top:266px;width:13px;height:31px;background:#8ecbea"></div>
<div class="abs" style="left:1379px;top:415px;width:34px;height:20px;border:1px solid #dfe5ea"></div>
<svg class="abs" style="left:1387px;top:421px" width="7" height="8" viewBox="0 0 7 8"><path d="M0.5 0.6 H6.5" stroke="#e8262a" stroke-width="1.2"/><path d="M3.5 2 V5" stroke="#e8262a" stroke-width="1.6"/><path d="M0.8 4.4 L3.5 7.8 L6.2 4.4Z" fill="#e8262a"/></svg>
<div class="t" style="left:1399.7px;top:421px;font-size:11.5px;font-weight:700;color:#2a3340">8</div>
<div class="abs" style="left:1416px;top:297px;width:13px;height:90px;background:#f6cfbc"></div>
<div class="abs" style="left:1416px;top:266px;width:13px;height:31px;background:#8ecbea"></div>
<div class="abs" style="left:1414px;top:415px;width:34px;height:20px;border:1px solid #dfe5ea"></div>
<svg class="abs" style="left:1422px;top:421px" width="7" height="8" viewBox="0 0 7 8"><path d="M0.5 0.6 H6.5" stroke="#e8262a" stroke-width="1.2"/><path d="M3.5 2 V5" stroke="#e8262a" stroke-width="1.6"/><path d="M0.8 4.4 L3.5 7.8 L6.2 4.4Z" fill="#e8262a"/></svg>
<div class="t" style="left:1434.7px;top:421px;font-size:11.5px;font-weight:700;color:#2a3340">8</div>
<div class="abs" style="left:1451px;top:297px;width:13px;height:90px;background:#f6cfbc"></div>
<div class="abs" style="left:1451px;top:266px;width:13px;height:31px;background:#8ecbea"></div>
<div class="abs" style="left:1449px;top:415px;width:34px;height:20px;border:1px solid #dfe5ea"></div>
<svg class="abs" style="left:1457px;top:421px" width="7" height="8" viewBox="0 0 7 8"><path d="M0.5 0.6 H6.5" stroke="#e8262a" stroke-width="1.2"/><path d="M3.5 2 V5" stroke="#e8262a" stroke-width="1.6"/><path d="M0.8 4.4 L3.5 7.8 L6.2 4.4Z" fill="#e8262a"/></svg>
<div class="t" style="left:1469.7px;top:421px;font-size:11.5px;font-weight:700;color:#2a3340">8</div>
<div class="abs" style="left:1486px;top:297px;width:13px;height:90px;background:#f6cfbc"></div>
<div class="abs" style="left:1486px;top:266px;width:13px;height:31px;background:#8ecbea"></div>
<div class="abs" style="left:1484px;top:415px;width:34px;height:20px;border:1px solid #dfe5ea"></div>
<svg class="abs" style="left:1492px;top:421px" width="7" height="8" viewBox="0 0 7 8"><path d="M0.5 0.6 H6.5" stroke="#e8262a" stroke-width="1.2"/><path d="M3.5 2 V5" stroke="#e8262a" stroke-width="1.6"/><path d="M0.8 4.4 L3.5 7.8 L6.2 4.4Z" fill="#e8262a"/></svg>
<div class="t" style="left:1504.7px;top:421px;font-size:11.5px;font-weight:700;color:#2a3340">8</div>
<div class="abs" style="left:1521px;top:297px;width:13px;height:90px;background:#f6cfbc"></div>
<div class="abs" style="left:1521px;top:266px;width:13px;height:31px;background:#8ecbea"></div>
<div class="abs" style="left:1519px;top:415px;width:34px;height:20px;border:1px solid #dfe5ea"></div>
<svg class="abs" style="left:1527px;top:421px" width="7" height="8" viewBox="0 0 7 8"><path d="M0.5 0.6 H6.5" stroke="#e8262a" stroke-width="1.2"/><path d="M3.5 2 V5" stroke="#e8262a" stroke-width="1.6"/><path d="M0.8 4.4 L3.5 7.8 L6.2 4.4Z" fill="#e8262a"/></svg>
<div class="t" style="left:1539.7px;top:421px;font-size:11.5px;font-weight:700;color:#2a3340">8</div>
<div class="abs" style="left:1556px;top:282px;width:13px;height:105px;background:#f6cfbc"></div>
<div class="abs" style="left:1556px;top:251px;width:13px;height:31px;background:#8ecbea"></div>
<div class="abs" style="left:1554px;top:415px;width:34px;height:20px;border:1px solid #dfe5ea"></div>
<svg class="abs" style="left:1562px;top:421px" width="7" height="8" viewBox="0 0 7 8"><path d="M0.5 0.6 H6.5" stroke="#e8262a" stroke-width="1.2"/><path d="M3.5 2 V5" stroke="#e8262a" stroke-width="1.6"/><path d="M0.8 4.4 L3.5 7.8 L6.2 4.4Z" fill="#e8262a"/></svg>
<div class="t" style="left:1574.7px;top:421px;font-size:11.5px;font-weight:700;color:#2a3340">9</div>
<div class="abs" style="left:1591px;top:282px;width:13px;height:105px;background:#f6cfbc"></div>
<div class="abs" style="left:1591px;top:251px;width:13px;height:31px;background:#8ecbea"></div>
<div class="abs" style="left:1589px;top:415px;width:34px;height:20px;border:1px solid #dfe5ea"></div>
<svg class="abs" style="left:1597px;top:421px" width="7" height="8" viewBox="0 0 7 8"><path d="M0.5 0.6 H6.5" stroke="#e8262a" stroke-width="1.2"/><path d="M3.5 2 V5" stroke="#e8262a" stroke-width="1.6"/><path d="M0.8 4.4 L3.5 7.8 L6.2 4.4Z" fill="#e8262a"/></svg>
<div class="t" style="left:1609.7px;top:421px;font-size:11.5px;font-weight:700;color:#2a3340">9</div>
<div class="abs" style="left:1626px;top:282px;width:13px;height:105px;background:#f6cfbc"></div>
<div class="abs" style="left:1626px;top:251px;width:13px;height:31px;background:#8ecbea"></div>
<div class="abs" style="left:1624px;top:415px;width:34px;height:20px;border:1px solid #dfe5ea"></div>
<svg class="abs" style="left:1632px;top:421px" width="7" height="8" viewBox="0 0 7 8"><path d="M0.5 0.6 H6.5" stroke="#e8262a" stroke-width="1.2"/><path d="M3.5 2 V5" stroke="#e8262a" stroke-width="1.6"/><path d="M0.8 4.4 L3.5 7.8 L6.2 4.4Z" fill="#e8262a"/></svg>
<div class="t" style="left:1644.7px;top:421px;font-size:11.5px;font-weight:700;color:#2a3340">9</div>
<div class="abs" style="left:221px;top:203px;width:1437px;height:1px;background:rgba(0,0,0,0.075)"></div>
<div class="abs" style="left:221px;top:250px;width:1437px;height:1px;background:rgba(0,0,0,0.075)"></div>
<div class="abs" style="left:221px;top:296px;width:1437px;height:1px;background:rgba(0,0,0,0.075)"></div>
<div class="abs" style="left:221px;top:341px;width:1437px;height:1px;background:rgba(0,0,0,0.075)"></div>
<div class="abs" style="left:221px;top:387px;width:1437px;height:1px;background:#c9d3e6"></div>
<div class="ob" style="left:12px;top:457px;width:37px;height:37px"></div>
<svg class="abs" style="left:20px;top:466px" width="24" height="24" viewBox="0 0 24 24">
<circle cx="11" cy="11" r="8.9" stroke="#0fa0de" stroke-width="1.9" fill="none"/>
<ellipse cx="11" cy="11" rx="4.1" ry="8.9" stroke="#0fa0de" stroke-width="1.8" fill="none"/>
<path d="M2.5 7.1 H19.5 M2.5 13.6 H19.5" stroke="#0fa0de" stroke-width="1.8"/>
<circle cx="16.1" cy="15.7" r="6.3" fill="#fff"/><circle cx="16.1" cy="15.7" r="4.9" fill="#0fa0de"/>
<path d="M15 13.3 L18.3 15.7 L15 18.1Z" fill="#7fd0f2"/>
</svg>
<div class="ob" style="left:175px;top:457px;width:37px;height:37px"></div>
<div class="abs" style="left:191.8px;top:466.8px;width:4.5px;height:4.5px;border-radius:50%;background:#1ea0dc"></div>
<div class="abs" style="left:191.8px;top:474.6px;width:4.5px;height:4.5px;border-radius:50%;background:#1ea0dc"></div>
<div class="abs" style="left:191.8px;top:482.4px;width:4.5px;height:4.5px;border-radius:50%;background:#1ea0dc"></div>
<div class="abs" style="left:222px;top:457px;width:58px;height:37px;background:#195a98;border-radius:3px"></div>
<div class="t" style="left:233.78px;top:469.97px;font-size:13.5px;font-weight:700;transform:scaleX(0.82);transform-origin:0 0;color:#fff;text-shadow:1px 1px 0 #000,-1px 0 0 #000,0 -1px 0 #000,1px 0 0 #000,0 1px 0 #000,-0.7px -0.7px 0 #000,0.7px -0.7px 0 #000,-0.7px 0.7px 0 #000">VOICE</div>
<div class="abs" style="left:290px;top:457px;width:54px;height:37px;background:#6fd4fb;border-radius:3px"></div>
<div class="t" style="left:302.04px;top:469.97px;font-size:13.5px;font-weight:700;transform:scaleX(0.82);transform-origin:0 0;color:#111;text-shadow:1px 1px 0 #fff,-1px 0 0 #fff,0 -1px 0 #fff,1px 0 0 #fff,0 1px 0 #fff,-0.7px -0.7px 0 #fff,0.7px -0.7px 0 #fff,-0.7px 0.7px 0 #fff">CHAT</div>
<div class="abs" style="left:354px;top:457px;width:64px;height:37px;background:#4aa3ea;border-radius:3px"></div>
<div class="t" style="left:366.94px;top:469.97px;font-size:13.5px;font-weight:700;transform:scaleX(0.82);transform-origin:0 0;color:#fff;text-shadow:1px 1px 0 #000,-1px 0 0 #000,0 -1px 0 #000,1px 0 0 #000,0 1px 0 #000,-0.7px -0.7px 0 #000,0.7px -0.7px 0 #000,-0.7px 0.7px 0 #000">E-MAIL</div>
<div class="abs" style="left:428px;top:457px;width:63px;height:37px;background:#ffca0a;border-radius:3px"></div>
<div class="t" style="left:440.13px;top:469.97px;font-size:13.5px;font-weight:700;transform:scaleX(0.82);transform-origin:0 0;color:#111;text-shadow:1px 1px 0 #fff,-1px 0 0 #fff,0 -1px 0 #fff,1px 0 0 #fff,0 1px 0 #fff,-0.7px -0.7px 0 #fff,0.7px -0.7px 0 #fff,-0.7px 0.7px 0 #fff">LUNCH</div>
<div class="abs" style="left:501px;top:457px;width:62px;height:37px;background:#a23e88;border-radius:3px"></div>
<div class="t" style="left:512.32px;top:469.97px;font-size:13.5px;font-weight:700;transform:scaleX(0.82);transform-origin:0 0;color:#fff;text-shadow:1px 1px 0 #000,-1px 0 0 #000,0 -1px 0 #000,1px 0 0 #000,0 1px 0 #000,-0.7px -0.7px 0 #000,0.7px -0.7px 0 #000,-0.7px 0.7px 0 #000">BREAK</div>
<div class="abs" style="left:573px;top:457px;width:80px;height:37px;background:#ff7a00;border-radius:3px"></div>
<div class="t" style="left:584.91px;top:469.97px;font-size:13.5px;font-weight:700;transform:scaleX(0.82);transform-origin:0 0;color:#fff;text-shadow:1px 1px 0 #000,-1px 0 0 #000,0 -1px 0 #000,1px 0 0 #000,0 1px 0 #000,-0.7px -0.7px 0 #000,0.7px -0.7px 0 #000,-0.7px 0.7px 0 #000">VACATION</div>
<div class="abs" style="left:663px;top:457px;width:51px;height:37px;background:#cfc7a8;border-radius:3px"></div>
<div class="t" style="left:675.28px;top:469.97px;font-size:13.5px;font-weight:700;transform:scaleX(0.82);transform-origin:0 0;color:#111;text-shadow:1px 1px 0 #fff,-1px 0 0 #fff,0 -1px 0 #fff,1px 0 0 #fff,0 1px 0 #fff,-0.7px -0.7px 0 #fff,0.7px -0.7px 0 #fff,-0.7px 0.7px 0 #fff">SICK</div>
<div class="abs" style="left:724px;top:457px;width:95px;height:37px;background:#0a8a3c;border-radius:3px"></div>
<div class="t" style="left:736.25px;top:469.97px;font-size:13.5px;font-weight:700;transform:scaleX(0.82);transform-origin:0 0;color:#fff;text-shadow:1px 1px 0 #000,-1px 0 0 #000,0 -1px 0 #000,1px 0 0 #000,0 1px 0 #000,-0.7px -0.7px 0 #000,0.7px -0.7px 0 #000,-0.7px 0.7px 0 #000">TRAINING</div>
<svg class="abs" style="left:794.75px;top:470px" width="12" height="12" viewBox="0 0 12 12"><g transform="rotate(45 6 6)"><path d="M6 7.5 V12.5" stroke="#111" stroke-width="2.6" stroke-linecap="round"/><path d="M6 7.5 V12" stroke="#111" stroke-width="1.1"/><path d="M3.3 -0.3 H8.7 V1.6 H8 L8.4 5 L10.2 7.3 H1.8 L3.6 5 L4 1.6 H3.3Z" fill="#fff" stroke="#111" stroke-width="1"/></g></svg>
<div class="abs" style="left:829px;top:457px;width:91px;height:37px;background:#4cae0c;border-radius:3px"></div>
<div class="t" style="left:840.78px;top:469.97px;font-size:13.5px;font-weight:700;transform:scaleX(0.82);transform-origin:0 0;color:#fff;text-shadow:1px 1px 0 #000,-1px 0 0 #000,0 -1px 0 #000,1px 0 0 #000,0 1px 0 #000,-0.7px -0.7px 0 #000,0.7px -0.7px 0 #000,-0.7px 0.7px 0 #000">MEETING</div>
<svg class="abs" style="left:896.21px;top:470px" width="12" height="12" viewBox="0 0 12 12"><g transform="rotate(45 6 6)"><path d="M6 7.5 V12.5" stroke="#111" stroke-width="2.6" stroke-linecap="round"/><path d="M6 7.5 V12" stroke="#111" stroke-width="1.1"/><path d="M3.3 -0.3 H8.7 V1.6 H8 L8.4 5 L10.2 7.3 H1.8 L3.6 5 L4 1.6 H3.3Z" fill="#fff" stroke="#111" stroke-width="1"/></g></svg>
<div class="abs" style="left:930px;top:457px;width:111px;height:37px;background:#90e000;border-radius:3px"></div>
<div class="t" style="left:941.63px;top:469.97px;font-size:13.5px;font-weight:700;transform:scaleX(0.82);transform-origin:0 0;color:#111;text-shadow:1px 1px 0 #fff,-1px 0 0 #fff,0 -1px 0 #fff,1px 0 0 #fff,0 1px 0 #fff,-0.7px -0.7px 0 #fff,0.7px -0.7px 0 #fff,-0.7px 0.7px 0 #fff">ONE ON ONE</div>
<svg class="abs" style="left:1017.37px;top:470px" width="12" height="12" viewBox="0 0 12 12"><g transform="rotate(45 6 6)"><path d="M6 7.5 V12.5" stroke="#fff" stroke-width="2.6" stroke-linecap="round"/><path d="M6 7.5 V12" stroke="#111" stroke-width="1.1"/><path d="M3.3 -0.3 H8.7 V1.6 H8 L8.4 5 L10.2 7.3 H1.8 L3.6 5 L4 1.6 H3.3Z" fill="#111" stroke="#fff" stroke-width="1"/></g></svg>
<div class="abs" style="left:1051px;top:457px;width:73px;height:37px;background:#ffa050;border-radius:3px"></div>
<div class="t" style="left:1063.10px;top:469.97px;font-size:13.5px;font-weight:700;transform:scaleX(0.82);transform-origin:0 0;color:#111;text-shadow:1px 1px 0 #fff,-1px 0 0 #fff,0 -1px 0 #fff,1px 0 0 #fff,0 1px 0 #fff,-0.7px -0.7px 0 #fff,0.7px -0.7px 0 #fff,-0.7px 0.7px 0 #fff">HOLIDAY</div>
<div class="abs" style="left:1134px;top:457px;width:79px;height:37px;background:#b06450;border-radius:3px"></div>
<div class="t" style="left:1145.73px;top:469.97px;font-size:13.5px;font-weight:700;transform:scaleX(0.82);transform-origin:0 0;color:#fff;text-shadow:1px 1px 0 #000,-1px 0 0 #000,0 -1px 0 #000,1px 0 0 #000,0 1px 0 #000,-0.7px -0.7px 0 #000,0.7px -0.7px 0 #000,-0.7px 0.7px 0 #000">TASK 1</div>
<svg class="abs" style="left:1189.27px;top:470px" width="12" height="12" viewBox="0 0 12 12"><g transform="rotate(45 6 6)"><path d="M6 7.5 V12.5" stroke="#111" stroke-width="2.6" stroke-linecap="round"/><path d="M6 7.5 V12" stroke="#111" stroke-width="1.1"/><path d="M3.3 -0.3 H8.7 V1.6 H8 L8.4 5 L10.2 7.3 H1.8 L3.6 5 L4 1.6 H3.3Z" fill="#fff" stroke="#111" stroke-width="1"/></g></svg>
<div class="abs" style="left:1223px;top:457px;width:80px;height:37px;background:#c89c92;border-radius:3px"></div>
<div class="t" style="left:1235.23px;top:469.97px;font-size:13.5px;font-weight:700;transform:scaleX(0.82);transform-origin:0 0;color:#111;text-shadow:1px 1px 0 #fff,-1px 0 0 #fff,0 -1px 0 #fff,1px 0 0 #fff,0 1px 0 #fff,-0.7px -0.7px 0 #fff,0.7px -0.7px 0 #fff,-0.7px 0.7px 0 #fff">TASK 2</div>
<svg class="abs" style="left:1278.77px;top:470px" width="12" height="12" viewBox="0 0 12 12"><g transform="rotate(45 6 6)"><path d="M6 7.5 V12.5" stroke="#fff" stroke-width="2.6" stroke-linecap="round"/><path d="M6 7.5 V12" stroke="#111" stroke-width="1.1"/><path d="M3.3 -0.3 H8.7 V1.6 H8 L8.4 5 L10.2 7.3 H1.8 L3.6 5 L4 1.6 H3.3Z" fill="#111" stroke="#fff" stroke-width="1"/></g></svg>
<div class="abs" style="left:1313px;top:457px;width:80px;height:37px;background:#ecbcae;border-radius:3px"></div>
<div class="t" style="left:1325.23px;top:469.97px;font-size:13.5px;font-weight:700;transform:scaleX(0.82);transform-origin:0 0;color:#111;text-shadow:1px 1px 0 #fff,-1px 0 0 #fff,0 -1px 0 #fff,1px 0 0 #fff,0 1px 0 #fff,-0.7px -0.7px 0 #fff,0.7px -0.7px 0 #fff,-0.7px 0.7px 0 #fff">TASK 3</div>
<svg class="abs" style="left:1368.77px;top:470px" width="12" height="12" viewBox="0 0 12 12"><g transform="rotate(45 6 6)"><path d="M6 7.5 V12.5" stroke="#fff" stroke-width="2.6" stroke-linecap="round"/><path d="M6 7.5 V12" stroke="#111" stroke-width="1.1"/><path d="M3.3 -0.3 H8.7 V1.6 H8 L8.4 5 L10.2 7.3 H1.8 L3.6 5 L4 1.6 H3.3Z" fill="#111" stroke="#fff" stroke-width="1"/></g></svg>
<div class="t" style="left:12px;top:511.8px;font-size:13px;color:#555a61">America/Chicago</div>
<div class="t" style="left:12px;top:531.8px;font-size:13px;font-weight:700;color:#3a4048;letter-spacing:-0.3px">UTC -5 hours</div>
<div class="abs" style="left:222px;top:510px;width:1437px;height:100px;background:#fff;border:1px solid #c9d4ec;overflow:hidden">
<div class="abs" style="left:0;top:51px;width:1437px;height:48px;background:#f5f6fa;border-top:1px solid #c9d4ec"></div>
<div class="t" style="left:10.5px;top:19.3px;font-size:14.8px;color:#2a2f36;letter-spacing:0.25px">12:00 AM</div>
<div class="t" style="left:0px;width:34px;text-align:center;top:70.2px;font-size:12.2px;color:#2a2f36">:00</div>
<div class="abs" style="left:34px;top:51px;width:1px;height:49px;background:#c9d4ec"></div>
<div class="t" style="left:35px;width:34px;text-align:center;top:70.2px;font-size:12.2px;color:#2a2f36">:15</div>
<div class="abs" style="left:69px;top:51px;width:1px;height:49px;background:#c9d4ec"></div>
<div class="t" style="left:70px;width:34px;text-align:center;top:70.2px;font-size:12.2px;color:#2a2f36">:30</div>
<div class="abs" style="left:104px;top:51px;width:1px;height:49px;background:#c9d4ec"></div>
<div class="t" style="left:105px;width:34px;text-align:center;top:70.2px;font-size:12.2px;color:#2a2f36">:45</div>
<div class="abs" style="left:139px;top:0;width:1px;height:100px;background:#c9d4ec"></div>
<div class="t" style="left:150.5px;top:19.3px;font-size:14.8px;color:#2a2f36;letter-spacing:0.25px">01:00 AM</div>
<div class="t" style="left:140px;width:34px;text-align:center;top:70.2px;font-size:12.2px;color:#2a2f36">:00</div>
<div class="abs" style="left:174px;top:51px;width:1px;height:49px;background:#c9d4ec"></div>
<div class="t" style="left:175px;width:34px;text-align:center;top:70.2px;font-size:12.2px;color:#2a2f36">:15</div>
<div class="abs" style="left:209px;top:51px;width:1px;height:49px;background:#c9d4ec"></div>
<div class="t" style="left:210px;width:34px;text-align:center;top:70.2px;font-size:12.2px;color:#2a2f36">:30</div>
<div class="abs" style="left:244px;top:51px;width:1px;height:49px;background:#c9d4ec"></div>
<div class="t" style="left:245px;width:34px;text-align:center;top:70.2px;font-size:12.2px;color:#2a2f36">:45</div>
<div class="abs" style="left:279px;top:0;width:1px;height:100px;background:#c9d4ec"></div>
<div class="t" style="left:290.5px;top:19.3px;font-size:14.8px;color:#2a2f36;letter-spacing:0.25px">02:00 AM</div>
<div class="t" style="left:280px;width:34px;text-align:center;top:70.2px;font-size:12.2px;color:#2a2f36">:00</div>
<div class="abs" style="left:314px;top:51px;width:1px;height:49px;background:#c9d4ec"></div>
<div class="t" style="left:315px;width:34px;text-align:center;top:70.2px;font-size:12.2px;color:#2a2f36">:15</div>
<div class="abs" style="left:349px;top:51px;width:1px;height:49px;background:#c9d4ec"></div>
<div class="t" style="left:350px;width:34px;text-align:center;top:70.2px;font-size:12.2px;color:#2a2f36">:30</div>
<div class="abs" style="left:384px;top:51px;width:1px;height:49px;background:#c9d4ec"></div>
<div class="t" style="left:385px;width:34px;text-align:center;top:70.2px;font-size:12.2px;color:#2a2f36">:45</div>
<div class="abs" style="left:419px;top:0;width:1px;height:100px;background:#c9d4ec"></div>
<div class="t" style="left:430.5px;top:19.3px;font-size:14.8px;color:#2a2f36;letter-spacing:0.25px">03:00 AM</div>
<div class="t" style="left:420px;width:34px;text-align:center;top:70.2px;font-size:12.2px;color:#2a2f36">:00</div>
<div class="abs" style="left:454px;top:51px;width:1px;height:49px;background:#c9d4ec"></div>
<div class="t" style="left:455px;width:34px;text-align:center;top:70.2px;font-size:12.2px;color:#2a2f36">:15</div>
<div class="abs" style="left:489px;top:51px;width:1px;height:49px;background:#c9d4ec"></div>
<div class="t" style="left:490px;width:34px;text-align:center;top:70.2px;font-size:12.2px;color:#2a2f36">:30</div>
<div class="abs" style="left:524px;top:51px;width:1px;height:49px;background:#c9d4ec"></div>
<div class="t" style="left:525px;width:34px;text-align:center;top:70.2px;font-size:12.2px;color:#2a2f36">:45</div>
<div class="abs" style="left:559px;top:0;width:1px;height:100px;background:#c9d4ec"></div>
<div class="t" style="left:570.5px;top:19.3px;font-size:14.8px;color:#2a2f36;letter-spacing:0.25px">04:00 AM</div>
<div class="t" style="left:560px;width:34px;text-align:center;top:70.2px;font-size:12.2px;color:#2a2f36">:00</div>
<div class="abs" style="left:594px;top:51px;width:1px;height:49px;background:#c9d4ec"></div>
<div class="t" style="left:595px;width:34px;text-align:center;top:70.2px;font-size:12.2px;color:#2a2f36">:15</div>
<div class="abs" style="left:629px;top:51px;width:1px;height:49px;background:#c9d4ec"></div>
<div class="t" style="left:630px;width:34px;text-align:center;top:70.2px;font-size:12.2px;color:#2a2f36">:30</div>
<div class="abs" style="left:664px;top:51px;width:1px;height:49px;background:#c9d4ec"></div>
<div class="t" style="left:665px;width:34px;text-align:center;top:70.2px;font-size:12.2px;color:#2a2f36">:45</div>
<div class="abs" style="left:699px;top:0;width:1px;height:100px;background:#c9d4ec"></div>
<div class="t" style="left:710.5px;top:19.3px;font-size:14.8px;color:#2a2f36;letter-spacing:0.25px">05:00 AM</div>
<div class="t" style="left:700px;width:34px;text-align:center;top:70.2px;font-size:12.2px;color:#2a2f36">:00</div>
<div class="abs" style="left:734px;top:51px;width:1px;height:49px;background:#c9d4ec"></div>
<div class="t" style="left:735px;width:34px;text-align:center;top:70.2px;font-size:12.2px;color:#2a2f36">:15</div>
<div class="abs" style="left:769px;top:51px;width:1px;height:49px;background:#c9d4ec"></div>
<div class="t" style="left:770px;width:34px;text-align:center;top:70.2px;font-size:12.2px;color:#2a2f36">:30</div>
<div class="abs" style="left:804px;top:51px;width:1px;height:49px;background:#c9d4ec"></div>
<div class="t" style="left:805px;width:34px;text-align:center;top:70.2px;font-size:12.2px;color:#2a2f36">:45</div>
<div class="abs" style="left:839px;top:0;width:1px;height:100px;background:#c9d4ec"></div>
<div class="t" style="left:850.5px;top:19.3px;font-size:14.8px;color:#2a2f36;letter-spacing:0.25px">06:00 AM</div>
<div class="t" style="left:840px;width:34px;text-align:center;top:70.2px;font-size:12.2px;color:#2a2f36">:00</div>
<div class="abs" style="left:874px;top:51px;width:1px;height:49px;background:#c9d4ec"></div>
<div class="t" style="left:875px;width:34px;text-align:center;top:70.2px;font-size:12.2px;color:#2a2f36">:15</div>
<div class="abs" style="left:909px;top:51px;width:1px;height:49px;background:#c9d4ec"></div>
<div class="t" style="left:910px;width:34px;text-align:center;top:70.2px;font-size:12.2px;color:#2a2f36">:30</div>
<div class="abs" style="left:944px;top:51px;width:1px;height:49px;background:#c9d4ec"></div>
<div class="t" style="left:945px;width:34px;text-align:center;top:70.2px;font-size:12.2px;color:#2a2f36">:45</div>
<div class="abs" style="left:979px;top:0;width:1px;height:100px;background:#c9d4ec"></div>
<div class="t" style="left:990.5px;top:19.3px;font-size:14.8px;color:#2a2f36;letter-spacing:0.25px">07:00 AM</div>
<div class="t" style="left:980px;width:34px;text-align:center;top:70.2px;font-size:12.2px;color:#2a2f36">:00</div>
<div class="abs" style="left:1014px;top:51px;width:1px;height:49px;background:#c9d4ec"></div>
<div class="t" style="left:1015px;width:34px;text-align:center;top:70.2px;font-size:12.2px;color:#2a2f36">:15</div>
<div class="abs" style="left:1049px;top:51px;width:1px;height:49px;background:#c9d4ec"></div>
<div class="t" style="left:1050px;width:34px;text-align:center;top:70.2px;font-size:12.2px;color:#2a2f36">:30</div>
<div class="abs" style="left:1084px;top:51px;width:1px;height:49px;background:#c9d4ec"></div>
<div class="t" style="left:1085px;width:34px;text-align:center;top:70.2px;font-size:12.2px;color:#2a2f36">:45</div>
<div class="abs" style="left:1119px;top:0;width:1px;height:100px;background:#c9d4ec"></div>
<div class="t" style="left:1130.5px;top:19.3px;font-size:14.8px;color:#2a2f36;letter-spacing:0.25px">08:00 AM</div>
<div class="t" style="left:1120px;width:34px;text-align:center;top:70.2px;font-size:12.2px;color:#2a2f36">:00</div>
<div class="abs" style="left:1154px;top:51px;width:1px;height:49px;background:#c9d4ec"></div>
<div class="t" style="left:1155px;width:34px;text-align:center;top:70.2px;font-size:12.2px;color:#2a2f36">:15</div>
<div class="abs" style="left:1189px;top:51px;width:1px;height:49px;background:#c9d4ec"></div>
<div class="t" style="left:1190px;width:34px;text-align:center;top:70.2px;font-size:12.2px;color:#2a2f36">:30</div>
<div class="abs" style="left:1224px;top:51px;width:1px;height:49px;background:#c9d4ec"></div>
<div class="t" style="left:1225px;width:34px;text-align:center;top:70.2px;font-size:12.2px;color:#2a2f36">:45</div>
<div class="abs" style="left:1259px;top:0;width:1px;height:100px;background:#c9d4ec"></div>
<div class="t" style="left:1270.5px;top:19.3px;font-size:14.8px;color:#2a2f36;letter-spacing:0.25px">09:00 AM</div>
<div class="t" style="left:1260px;width:34px;text-align:center;top:70.2px;font-size:12.2px;color:#2a2f36">:00</div>
<div class="abs" style="left:1294px;top:51px;width:1px;height:49px;background:#c9d4ec"></div>
<div class="t" style="left:1295px;width:34px;text-align:center;top:70.2px;font-size:12.2px;color:#2a2f36">:15</div>
<div class="abs" style="left:1329px;top:51px;width:1px;height:49px;background:#c9d4ec"></div>
<div class="t" style="left:1330px;width:34px;text-align:center;top:70.2px;font-size:12.2px;color:#2a2f36">:30</div>
<div class="abs" style="left:1364px;top:51px;width:1px;height:49px;background:#c9d4ec"></div>
<div class="t" style="left:1365px;width:34px;text-align:center;top:70.2px;font-size:12.2px;color:#2a2f36">:45</div>
<div class="abs" style="left:1399px;top:0;width:1px;height:100px;background:#c9d4ec"></div>
<div class="t" style="left:1410.5px;top:19.3px;font-size:14.8px;color:#2a2f36;letter-spacing:0.25px">10:00 AM</div>
<div class="t" style="left:1400px;width:34px;text-align:center;top:70.2px;font-size:12.2px;color:#2a2f36">:00</div>
<div class="abs" style="left:1434px;top:51px;width:1px;height:49px;background:#c9d4ec"></div>
<div class="t" style="left:1435px;width:34px;text-align:center;top:70.2px;font-size:12.2px;color:#2a2f36">:15</div>
<div class="abs" style="left:1469px;top:51px;width:1px;height:49px;background:#c9d4ec"></div>
<div class="t" style="left:1470px;width:34px;text-align:center;top:70.2px;font-size:12.2px;color:#2a2f36">:30</div>
<div class="abs" style="left:1504px;top:51px;width:1px;height:49px;background:#c9d4ec"></div>
<div class="t" style="left:1505px;width:34px;text-align:center;top:70.2px;font-size:12.2px;color:#2a2f36">:45</div>
</div>
<div class="abs" style="left:12px;top:610px;width:1647px;height:220px;background:#fff;border-right:1px solid #c9d4ec"></div>
<div class="abs" style="left:12px;top:609px;width:1px;height:221px;background:#c9d4ec"></div>
<div class="abs" style="left:222px;top:609px;width:1px;height:221px;background:#c9d4ec"></div>
<div class="abs" style="left:12px;top:609px;width:211px;height:1px;background:#c9d4ec"></div>
<div class="abs" style="left:12px;top:829px;width:211px;height:1px;background:#c9d4ec"></div>
<div class="abs" style="left:23px;top:622px;width:14px;height:14px;border-radius:50%;background:#1ea0dc;color:#fff;font-size:11px;font-weight:700;line-height:14px;text-align:center">?</div>
<div class="abs" style="left:24px;top:639px;width:11px;height:11px;border-radius:50%;background:#2394d6"></div>
<div class="abs" style="left:38px;top:639px;width:11px;height:11px;border-radius:50%;background:#ec9e7c"></div>
<div class="t" style="left:47px;top:622.2px;font-size:13px;color:#2a2f36;letter-spacing:0px">Andy Brown</div>
<svg class="abs" style="left:198px;top:623px" width="13" height="12" viewBox="0 0 13 12"><circle cx="6.3" cy="3.7" r="3.1" fill="#0ca0df"/><path d="M0.9 12 V9 Q0.9 7 3.2 7 H9.4 Q11.9 7 11.9 9 V12Z" fill="#0ca0df"/></svg>
<div class="abs" style="left:12px;top:654px;width:211px;height:1px;background:#c9d4ec"></div>
<div class="abs" style="left:223px;top:654px;width:1435px;height:1px;background:#e3e6ea"></div>
<div class="abs" style="left:23px;top:666px;width:14px;height:14px;border-radius:50%;background:#1ea0dc;color:#fff;font-size:11px;font-weight:700;line-height:14px;text-align:center">?</div>
<div class="abs" style="left:24px;top:683px;width:11px;height:11px;border-radius:50%;background:#2394d6"></div>
<div class="abs" style="left:38px;top:683px;width:11px;height:11px;border-radius:50%;background:#ec9e7c"></div>
<div class="t" style="left:47px;top:666.2px;font-size:13px;color:#2a2f36;letter-spacing:0px">Emily Moore</div>
<svg class="abs" style="left:198px;top:667px" width="13" height="12" viewBox="0 0 13 12"><circle cx="6.3" cy="3.7" r="3.1" fill="#0ca0df"/><path d="M0.9 12 V9 Q0.9 7 3.2 7 H9.4 Q11.9 7 11.9 9 V12Z" fill="#0ca0df"/></svg>
<div class="abs" style="left:12px;top:698px;width:211px;height:1px;background:#c9d4ec"></div>
<div class="abs" style="left:223px;top:698px;width:1435px;height:1px;background:#e3e6ea"></div>
<div class="abs" style="left:23px;top:710px;width:14px;height:14px;border-radius:50%;background:#1ea0dc;color:#fff;font-size:11px;font-weight:700;line-height:14px;text-align:center">?</div>
<div class="abs" style="left:24px;top:727px;width:11px;height:11px;border-radius:50%;background:#2394d6"></div>
<div class="t" style="left:47px;top:710.2px;font-size:13px;color:#2a2f36;letter-spacing:0px">Ethan Jones</div>
<svg class="abs" style="left:198px;top:711px" width="13" height="12" viewBox="0 0 13 12"><circle cx="6.3" cy="3.7" r="3.1" fill="#0ca0df"/><path d="M0.9 12 V9 Q0.9 7 3.2 7 H9.4 Q11.9 7 11.9 9 V12Z" fill="#0ca0df"/></svg>
<div class="abs" style="left:12px;top:742px;width:211px;height:1px;background:#c9d4ec"></div>
<div class="abs" style="left:223px;top:742px;width:1435px;height:1px;background:#e3e6ea"></div>
<div class="abs" style="left:23px;top:754px;width:14px;height:14px;border-radius:50%;background:#1ea0dc;color:#fff;font-size:11px;font-weight:700;line-height:14px;text-align:center">?</div>
<div class="abs" style="left:24px;top:771px;width:11px;height:11px;border-radius:50%;background:#2394d6"></div>
<div class="abs" style="left:38px;top:771px;width:11px;height:11px;border-radius:50%;background:#ec9e7c"></div>
<div class="t" style="left:47px;top:754.2px;font-size:13px;color:#2a2f36;letter-spacing:0px">Harry Williams</div>
<svg class="abs" style="left:198px;top:755px" width="13" height="12" viewBox="0 0 13 12"><circle cx="6.3" cy="3.7" r="3.1" fill="#0ca0df"/><path d="M0.9 12 V9 Q0.9 7 3.2 7 H9.4 Q11.9 7 11.9 9 V12Z" fill="#0ca0df"/></svg>
<div class="abs" style="left:12px;top:786px;width:211px;height:1px;background:#c9d4ec"></div>
<div class="abs" style="left:223px;top:786px;width:1435px;height:1px;background:#e3e6ea"></div>
<div class="abs" style="left:23px;top:798px;width:14px;height:14px;border-radius:50%;background:#1ea0dc;color:#fff;font-size:11px;font-weight:700;line-height:14px;text-align:center">?</div>
<div class="abs" style="left:24px;top:815px;width:11px;height:11px;border-radius:50%;background:#2394d6"></div>
<div class="abs" style="left:38px;top:815px;width:11px;height:11px;border-radius:50%;background:#ec9e7c"></div>
<div class="t" style="left:47px;top:798.2px;font-size:13px;color:#2a2f36;letter-spacing:0px">Isabella Tylor</div>
<svg class="abs" style="left:198px;top:799px" width="13" height="12" viewBox="0 0 13 12"><circle cx="6.3" cy="3.7" r="3.1" fill="#0ca0df"/><path d="M0.9 12 V9 Q0.9 7 3.2 7 H9.4 Q11.9 7 11.9 9 V12Z" fill="#0ca0df"/></svg>
<div class="abs" style="left:222px;top:830px;width:1437px;height:15px;background:#e4e9ec;border-bottom:1px solid #c9d4ec;border-right:1px solid #c9d4ec"></div>
<div class="abs" style="left:223px;top:831px;width:612px;height:13px;background:#cdd1d5;border-radius:7px"></div>
</body></html>
